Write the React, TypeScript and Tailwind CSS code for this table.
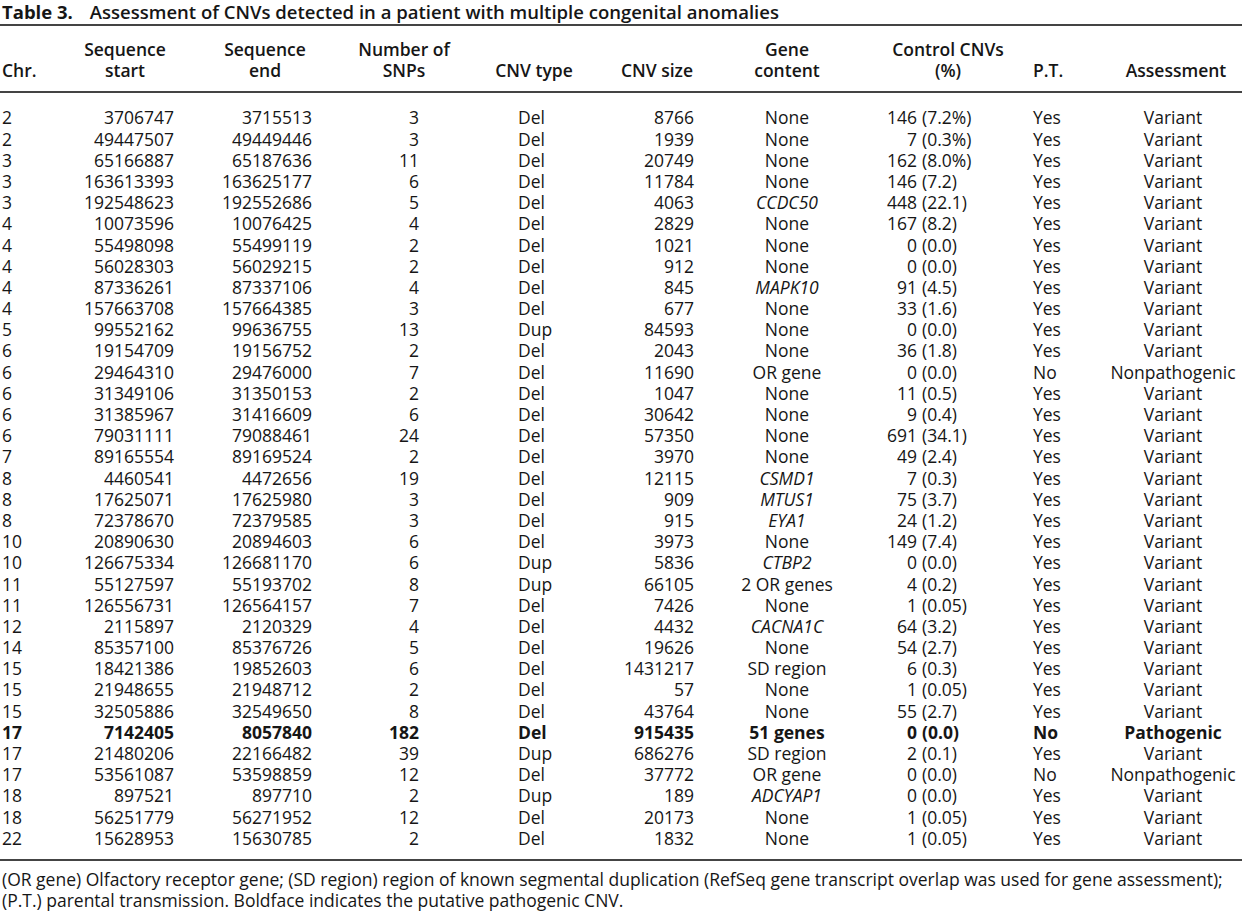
const rows: string[][] = [
  ['2', '3706747', '3715513', '3', 'Del', '8766', 'None', '146', '(7.2%)', 'Yes', 'Variant'],
  ['2', '49447507', '49449446', '3', 'Del', '1939', 'None', '7', '(0.3%)', 'Yes', 'Variant'],
  ['3', '65166887', '65187636', '11', 'Del', '20749', 'None', '162', '(8.0%)', 'Yes', 'Variant'],
  ['3', '163613393', '163625177', '6', 'Del', '11784', 'None', '146', '(7.2)', 'Yes', 'Variant'],
  ['3', '192548623', '192552686', '5', 'Del', '4063', '*CCDC50', '448', '(22.1)', 'Yes', 'Variant'],
  ['4', '10073596', '10076425', '4', 'Del', '2829', 'None', '167', '(8.2)', 'Yes', 'Variant'],
  ['4', '55498098', '55499119', '2', 'Del', '1021', 'None', '0', '(0.0)', 'Yes', 'Variant'],
  ['4', '56028303', '56029215', '2', 'Del', '912', 'None', '0', '(0.0)', 'Yes', 'Variant'],
  ['4', '87336261', '87337106', '4', 'Del', '845', '*MAPK10', '91', '(4.5)', 'Yes', 'Variant'],
  ['4', '157663708', '157664385', '3', 'Del', '677', 'None', '33', '(1.6)', 'Yes', 'Variant'],
  ['5', '99552162', '99636755', '13', 'Dup', '84593', 'None', '0', '(0.0)', 'Yes', 'Variant'],
  ['6', '19154709', '19156752', '2', 'Del', '2043', 'None', '36', '(1.8)', 'Yes', 'Variant'],
  ['6', '29464310', '29476000', '7', 'Del', '11690', 'OR gene', '0', '(0.0)', 'No', 'Nonpathogenic'],
  ['6', '31349106', '31350153', '2', 'Del', '1047', 'None', '11', '(0.5)', 'Yes', 'Variant'],
  ['6', '31385967', '31416609', '6', 'Del', '30642', 'None', '9', '(0.4)', 'Yes', 'Variant'],
  ['6', '79031111', '79088461', '24', 'Del', '57350', 'None', '691', '(34.1)', 'Yes', 'Variant'],
  ['7', '89165554', '89169524', '2', 'Del', '3970', 'None', '49', '(2.4)', 'Yes', 'Variant'],
  ['8', '4460541', '4472656', '19', 'Del', '12115', '*CSMD1', '7', '(0.3)', 'Yes', 'Variant'],
  ['8', '17625071', '17625980', '3', 'Del', '909', '*MTUS1', '75', '(3.7)', 'Yes', 'Variant'],
  ['8', '72378670', '72379585', '3', 'Del', '915', '*EYA1', '24', '(1.2)', 'Yes', 'Variant'],
  ['10', '20890630', '20894603', '6', 'Del', '3973', 'None', '149', '(7.4)', 'Yes', 'Variant'],
  ['10', '126675334', '126681170', '6', 'Dup', '5836', '*CTBP2', '0', '(0.0)', 'Yes', 'Variant'],
  ['11', '55127597', '55193702', '8', 'Dup', '66105', '2 OR genes', '4', '(0.2)', 'Yes', 'Variant'],
  ['11', '126556731', '126564157', '7', 'Del', '7426', 'None', '1', '(0.05)', 'Yes', 'Variant'],
  ['12', '2115897', '2120329', '4', 'Del', '4432', '*CACNA1C', '64', '(3.2)', 'Yes', 'Variant'],
  ['14', '85357100', '85376726', '5', 'Del', '19626', 'None', '54', '(2.7)', 'Yes', 'Variant'],
  ['15', '18421386', '19852603', '6', 'Del', '1431217', 'SD region', '6', '(0.3)', 'Yes', 'Variant'],
  ['15', '21948655', '21948712', '2', 'Del', '57', 'None', '1', '(0.05)', 'Yes', 'Variant'],
  ['15', '32505886', '32549650', '8', 'Del', '43764', 'None', '55', '(2.7)', 'Yes', 'Variant'],
  ['17', '7142405', '8057840', '182', 'Del', '915435', '51 genes', '0', '(0.0)', 'No', 'Pathogenic'],
  ['17', '21480206', '22166482', '39', 'Dup', '686276', 'SD region', '2', '(0.1)', 'Yes', 'Variant'],
  ['17', '53561087', '53598859', '12', 'Del', '37772', 'OR gene', '0', '(0.0)', 'No', 'Nonpathogenic'],
  ['18', '897521', '897710', '2', 'Dup', '189', '*ADCYAP1', '0', '(0.0)', 'Yes', 'Variant'],
  ['18', '56251779', '56271952', '12', 'Del', '20173', 'None', '1', '(0.05)', 'Yes', 'Variant'],
  ['22', '15628953', '15630785', '2', 'Del', '1832', 'None', '1', '(0.05)', 'Yes', 'Variant'],
];

// column boundaries: 0 | 60 | 190 | 340 | 468 | 600 | 714 | 860 | 1010 | 1110 | 1242
const cols = 'grid grid-cols-[60px_130px_150px_128px_132px_114px_146px_150px_100px_132px]';

function Row({ r }: { r: string[] }) {
  const bold = r[9] === 'No' && r[10] === 'Pathogenic';
  const gene = r[6].startsWith('*') ? <span className="italic">{r[6].slice(1)}</span> : r[6];
  return (
    <div className={`${cols} h-[21.2px] leading-[21.2px] whitespace-nowrap ${bold ? 'font-bold' : ''}`}>
      <div className="pl-[2px]">{r[0]}</div>
      <div className="text-right pr-[16px]">{r[1]}</div>
      <div className="text-right pr-[28px]">{r[2]}</div>
      <div className="text-right pr-[49px]">{r[3]}</div>
      <div className="pl-[50px]">{r[4]}</div>
      <div className="text-right pr-[20px]">{r[5]}</div>
      <div className="text-center">{gene}</div>
      <div className="flex">
        <span className="w-[57px] text-right">{r[7]}</span>
        <span className="ml-[5px]">{r[8]}</span>
      </div>
      <div className="pl-[23px]">{r[9]}</div>
      <div className="text-center pr-[6px]">{r[10]}</div>
    </div>
  );
}

export default function App() {
  return (
    <div className="w-[1242px] h-[918px] bg-white text-[#161616] font-['Open_Sans',sans-serif] text-[17.5px] overflow-hidden">
      <div className="h-[24px] flex items-end pl-[2px] pb-[1px] text-[18.5px] leading-[22px] whitespace-nowrap">
        <span className="font-bold">Table 3.</span>
        <span className="font-semibold ml-[17px]">Assessment of CNVs detected in a patient with multiple congenital anomalies</span>
      </div>
      <div className="h-[2px] bg-[#444]" />

      <div className={`${cols} pt-[12.5px] pb-[10.5px] leading-[21px] font-semibold whitespace-nowrap`}>
        <div className="pl-[2px] pt-[21px]">Chr.</div>
        <div className="text-center">Sequence<br />start</div>
        <div className="text-center">Sequence<br />end</div>
        <div className="text-center">Number of<br />SNPs</div>
        <div className="text-center pt-[21px]">CNV type</div>
        <div className="text-center pt-[21px]">CNV size</div>
        <div className="text-center">Gene<br />content</div>
        <div className="text-center pl-[26px]">Control CNVs<br />(%)</div>
        <div className="pl-[23px] pt-[21px]">P.T.</div>
        <div className="text-center pt-[21px]">Assessment</div>
      </div>
      <div className="h-[2px] bg-[#444]" />

      <div className="pt-[14.4px] pb-[9.6px]">
        {rows.map((r, i) => (
          <Row key={i} r={r} />
        ))}
      </div>
      <div className="h-[2px] bg-[#444]" />

      <p className="pt-[8.5px] pl-[2px] leading-[21px] whitespace-nowrap">
        (OR gene) Olfactory receptor gene; (SD region) region of known segmental duplication (RefSeq gene transcript overlap was used for gene assessment);
        <br />
        (P.T.) parental transmission. Boldface indicates the putative pathogenic CNV.
      </p>
    </div>
  );
}
